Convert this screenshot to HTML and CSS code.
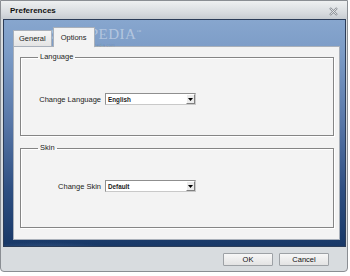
FILE: index.html
```html
<!DOCTYPE html>
<html lang="en">
<head>
    <meta charset="UTF-8">
    <title>Preferences</title>
    <link rel="stylesheet" href="styles.css">
</head>
<body>
<div class="window">
    <div class="titlebar">
        <span class="title">Preferences</span>
        <svg class="close" width="9" height="9" viewBox="0 0 9 9">
            <path d="M1 1 L8 8 M8 1 L1 8" stroke="#8e9399" stroke-width="2.2"/>
            <path d="M1.5 1.5 L7.5 7.5 M7.5 1.5 L1.5 7.5" stroke="#f4f5f6" stroke-width="0.8"/>
        </svg>
    </div>
    <div class="frame">
        <div class="tabs">
            <div class="tab">General</div>
            <div class="tab tab-active">Options</div>
        </div>
        <div class="panel">
            <fieldset class="group group-language">
                <legend>Language</legend>
                <div class="row">
                    <label>Change Language</label>
                    <div class="select">
                        <span class="select-value">English</span>
                        <span class="select-btn"><svg width="5" height="3" viewBox="0 0 5 3"><path d="M0 0 H5 L2.5 3 Z" fill="#000"/></svg></span>
                    </div>
                </div>
            </fieldset>
            <fieldset class="group group-skin">
                <legend>Skin</legend>
                <div class="row">
                    <label>Change Skin</label>
                    <div class="select">
                        <span class="select-value">Default</span>
                        <span class="select-btn"><svg width="5" height="3" viewBox="0 0 5 3"><path d="M0 0 H5 L2.5 3 Z" fill="#000"/></svg></span>
                    </div>
                </div>
            </fieldset>
        </div>
    </div>
    <div class="footer">
        <button class="btn">OK</button>
        <button class="btn">Cancel</button>
    </div>
    <div class="watermark">SOFTPEDIA<sup>™</sup><small>www.softpedia.com</small></div>
</div>
</body>
</html>
```

FILE: styles.css
```css
body {
    margin: 0;
    background: #fff;
    font-family: "Liberation Sans", Arial, sans-serif;
    font-size: 7.5px;
    color: #222;
}
.window {
    position: relative;
    width: 348px;
    height: 272px;
    box-sizing: border-box;
    border: 1px solid #8a8e93;
    border-radius: 0 0 4px 4px;
    background: #d8dcdf;
    display: flex;
    flex-direction: column;
    overflow: hidden;
}
.titlebar {
    height: 18px;
    flex: none;
    display: flex;
    align-items: center;
    justify-content: space-between;
    padding: 0 9px 0 9px;
    background: linear-gradient(#eef0f1, #d6dade 70%, #c7ccd1);
}
.title {
    font-weight: bold;
    font-size: 8px;
    color: #111;
}
.close {
    margin-top: 2px;
}
.frame {
    flex: none;
    height: 228px;
    box-sizing: border-box;
    margin: 0 1px 0 2px;
    border: 1px solid #2b3c58;
    padding: 7px 5px 6px 9px;
    background:
        radial-gradient(ellipse 90px 14px at 40px 236px, rgba(140, 170, 210, 0.45), transparent),
        linear-gradient(#87a6ce, #7b9bc6 15%, #5877a8 45%, #2e4f82 75%, #183867);
    display: flex;
    flex-direction: column;
}
.tabs {
    display: flex;
    align-items: flex-end;
    height: 19px;
    gap: 1px;
}
.tab {
    height: 16px;
    box-sizing: border-box;
    padding: 0 5px;
    line-height: 15px;
    background: linear-gradient(#f6f6f6, #e4e4e4);
    border: 1px solid #a9b0ba;
    border-bottom: none;
}
.tab-active {
    height: 20px;
    margin-bottom: -1px;
    padding: 0 7px;
    line-height: 19px;
    background: #f3f3f3;
    position: relative;
    z-index: 1;
}
.panel {
    height: 194px;
    box-sizing: border-box;
    background: #f3f3f3;
    border: 1px solid #a9b0ba;
    padding: 5px 5px 0 6px;
}
.group {
    margin: 0;
    padding: 31px 0 30px 0;
    min-inline-size: 0;
    border: 1px solid #858585;
    box-shadow: 1px 1px 0 #fff, inset 1px 1px 0 #fff;
}
.group-skin {
    margin-top: 7px;
    padding: 27px 0 35px 0;
}
.group legend {
    margin-left: 17px;
    padding: 0 2px;
    line-height: 10px;
    font-size: 7.5px;
}
.row {
    display: flex;
    align-items: center;
    gap: 4px;
    height: 12px;
}
.row label {
    width: 80px;
    text-align: right;
}
.select {
    width: 91px;
    height: 12px;
    box-sizing: border-box;
    background: #fff;
    border: 1px solid #8f8f8f;
    border-right-color: #c9c9c9;
    border-bottom-color: #c9c9c9;
    display: flex;
    align-items: center;
    justify-content: space-between;
}
.select-value {
    padding-left: 2px;
    font-size: 6.3px;
    font-weight: bold;
    color: #222;
}
.select-btn {
    width: 9px;
    height: 10px;
    box-sizing: border-box;
    background: #ececec;
    border: 1px solid #fff;
    border-right-color: #808080;
    border-bottom-color: #808080;
    display: flex;
    align-items: center;
    justify-content: center;
}
.footer {
    flex: 1;
    display: flex;
    justify-content: flex-end;
    align-items: flex-start;
    gap: 6px;
    padding: 6px 18px 0 0;
}
.btn {
    width: 50px;
    height: 13px;
    padding: 0;
    font-family: "Liberation Sans", Arial, sans-serif;
    font-size: 7.5px;
    color: #111;
    background: linear-gradient(#f7f7f7, #e3e3e3);
    border: 1px solid #9da1a5;
    border-radius: 1px;
}
/* watermark sits behind the active tab */
.watermark {
    position: absolute;
    left: 50px;
    top: 25px;
    font-family: "Liberation Serif", serif;
    font-size: 15px;
    letter-spacing: 0.5px;
    color: rgba(255, 255, 255, 0.4);
    pointer-events: none;
    z-index: 0;
}
.watermark sup {
    font-size: 5px;
}
.watermark small {
    display: block;
    margin-left: 25px;
    font-family: "Liberation Sans", Arial, sans-serif;
    font-size: 4.5px;
    letter-spacing: 0;
    color: rgba(0, 0, 0, 0.12);
}
```
